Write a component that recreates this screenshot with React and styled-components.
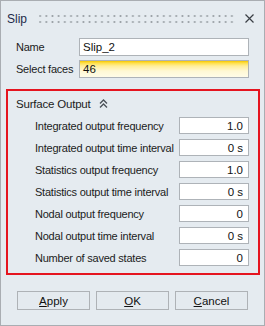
import React from "react";
import styled, { createGlobalStyle } from "styled-components";

const Global = createGlobalStyle`
  html, body { margin: 0; padding: 0; background: #e5ebf0; }
  body { font-family: "Liberation Sans", Arial, sans-serif; font-size: 11px; color: #1b1b1b; }
  * { box-sizing: border-box; }
`;

const Window = styled.div`
  width: 265px;
  height: 326px;
  border: 1px solid #a9adb2;
  background: #e5ebf0;
  display: flex;
  flex-direction: column;
`;

const TitleBar = styled.div`
  height: 37px;
  display: flex;
  align-items: center;
  padding: 0 10px 2px 6px;
`;

const Title = styled.span`
  font-size: 12px;
  color: #1d2a4a;
  width: 32px;
`;

const Grip = styled.div`
  flex: 1;
  height: 8px;
  margin-right: 11px;
  background-image: radial-gradient(circle, #9ba1a7 0.9px, transparent 1.1px);
  background-size: 6.2px 6px;
  background-position: -2px -2px;
`;

const Close = styled.svg`
  width: 9px;
  height: 9px;
`;

const TopForm = styled.div`
  display: grid;
  grid-template-columns: 63px 170px;
  row-gap: 4px;
  padding-left: 15px;
  align-items: center;
`;

const Label = styled.label`
  white-space: nowrap;
  letter-spacing: -0.22px;
`;

const TextBox = styled.div`
  height: ${(p) => (p.$compact ? "17px" : "18px")};
  border: 1px solid #aeb3b8;
  background: ${(p) =>
    p.$highlight
      ? "linear-gradient(#f6c700 0px, #ffe04a 2px, #ffee9a 5px, #fff8d4 10px, #fffce8 100%)"
      : "#ffffff"};
  padding: 0 ${(p) => (p.$right ? "5px" : "3px")};
  display: flex;
  align-items: center;
  justify-content: ${(p) => (p.$right ? "flex-end" : "flex-start")};
  font-size: 11.5px;
  color: #111;
`;

const Group = styled.div`
  margin: 11px 4px 0 5px;
  border: 2px solid #e5141f;
  padding: 3px 0 7px 8px;
`;

const GroupHeader = styled.div`
  display: flex;
  align-items: center;
  height: 19px;
  gap: 8px;
  font-size: 11.5px;
  letter-spacing: -0.2px;
`;

const Rows = styled.div`
  display: grid;
  grid-template-columns: 144px 70px;
  row-gap: 5px;
  padding-left: 19px;
  margin-top: 4px;
  align-items: center;
`;

const Buttons = styled.div`
  display: grid;
  grid-template-columns: repeat(3, 73px);
  column-gap: 6px;
  padding-left: 16px;
  margin-top: 16px;
`;

const Button = styled.button`
  height: 19px;
  border: 1px solid #aeb2b6;
  background: #e4eaef;
  font-family: inherit;
  font-size: 11.5px;
  color: #111;
  padding: 0;
  & u { text-decoration: underline; text-underline-offset: 1px; }
`;

const rows = [
  ["Integrated output frequency", "1.0"],
  ["Integrated output time interval", "0 s"],
  ["Statistics output frequency", "1.0"],
  ["Statistics output time interval", "0 s"],
  ["Nodal output frequency", "0"],
  ["Nodal output time interval", "0 s"],
  ["Number of saved states", "0"],
];

export default function App() {
  return (
    <>
      <Global />
      <Window>
        <TitleBar>
          <Title>Slip</Title>
          <Grip />
          <Close viewBox="0 0 9 9">
            <path d="M0.5 0.5 L8.5 8.5 M8.5 0.5 L0.5 8.5" stroke="#3a3f45" strokeWidth="1.2" fill="none" />
          </Close>
        </TitleBar>
        <TopForm>
          <Label>Name</Label>
          <TextBox>Slip_2</TextBox>
          <Label>Select faces</Label>
          <TextBox $highlight>46</TextBox>
        </TopForm>
        <Group>
          <GroupHeader>
            <span>Surface Output</span>
            <svg width="9" height="9" viewBox="0 0 9 9">
              <path d="M1 4.5 L4.5 1 L8 4.5 M1 8.5 L4.5 5 L8 8.5" stroke="#4a5058" strokeWidth="1.3" fill="none" />
            </svg>
          </GroupHeader>
          <Rows>
            {rows.map(([l, v]) => (
              <React.Fragment key={l}>
                <Label>{l}</Label>
                <TextBox $right $compact>{v}</TextBox>
              </React.Fragment>
            ))}
          </Rows>
        </Group>
        <Buttons>
          <Button><u>A</u>pply</Button>
          <Button><u>O</u>K</Button>
          <Button><u>C</u>ancel</Button>
        </Buttons>
      </Window>
    </>
  );
}
